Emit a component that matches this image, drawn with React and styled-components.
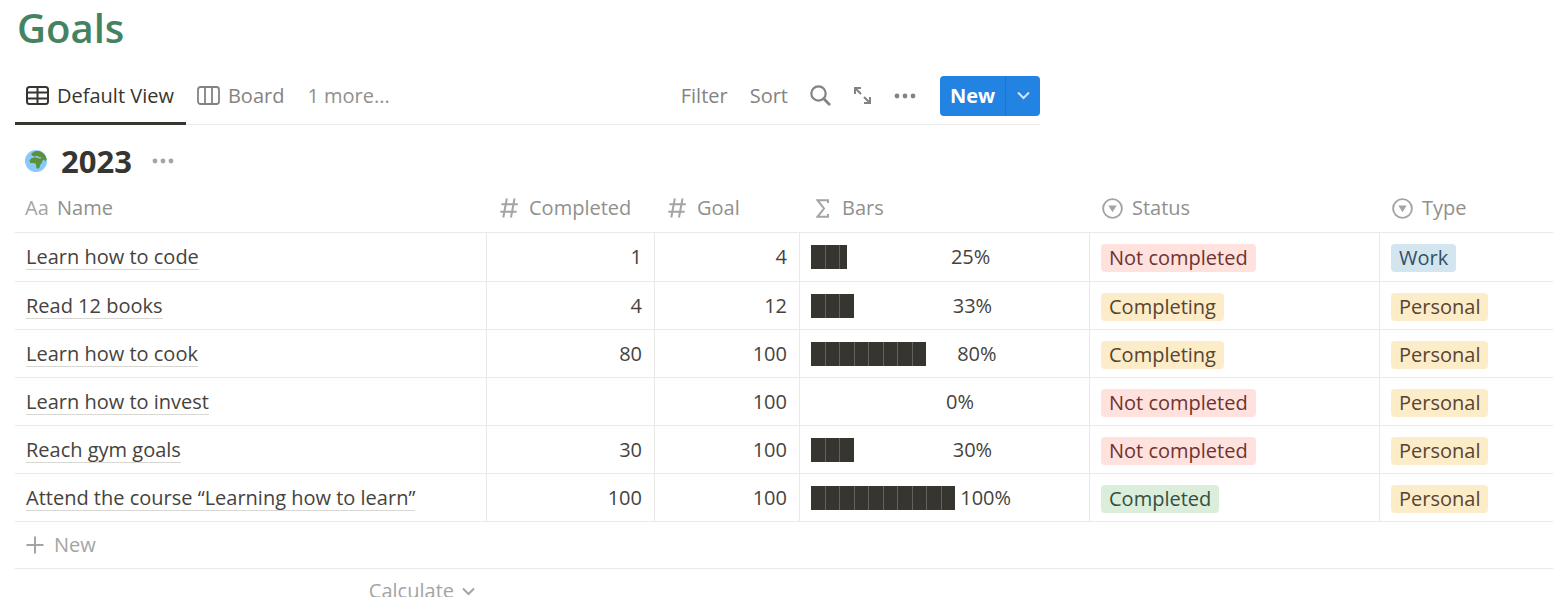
import React from 'react'
import styled, { createGlobalStyle, css } from 'styled-components'

const GlobalStyle = createGlobalStyle`
  * {
    box-sizing: border-box;
  }

  body {
    margin: 0;
    background: #fff;
    color: #45433e;
    font-family: 'Open Sans', 'Noto Sans', sans-serif;
    font-size: 20px;
    line-height: 28px;
  }

  button {
    padding: 0;
    border: 0;
    background: none;
    color: inherit;
    font: inherit;
    cursor: pointer;
  }

  svg {
    display: block;
    flex: none;
  }
`

const Page = styled.main`
  padding: 0 0 0 15px;
`

const Title = styled.h1`
  margin: 0;
  padding: 0 2px;
  color: #448361;
  font-size: 40px;
  font-weight: 600;
  line-height: 56px;
`

const Toolbar = styled.div`
  display: flex;
  justify-content: space-between;
  max-width: 1025px;
  margin-top: 13px;
  border-bottom: 1px solid #e9e9e7;
`

const Views = styled.nav`
  display: flex;
`

const ViewTab = styled.button`
  display: flex;
  align-items: center;
  gap: 8px;
  height: 56px;
  margin-bottom: -1px;
  padding: 0 12px 0 11px;
  border-bottom: 3px solid transparent;
  color: #85837f;
  font-weight: 500;

  ${({ $active }) =>
    $active &&
    css`
      border-bottom-color: #37352f;
      color: #37352f;
    `}

  ${({ $plain }) =>
    $plain &&
    css`
      color: #91908c;
      font-weight: 400;
    `}
`

const Actions = styled.div`
  display: flex;
  align-items: center;
  gap: 22px;
  padding-bottom: 2px;
  color: #85837f;
`

const ActionButton = styled.button`
  display: flex;
  align-items: center;
`

const SplitButton = styled.div`
  display: flex;
  height: 40px;
  margin-left: 2px;
  border-radius: 4px;
  overflow: hidden;
  background: #2383e2;
  color: #fff;
`

const SplitPart = styled.button`
  display: flex;
  align-items: center;
  justify-content: center;
  width: ${({ $main }) => ($main ? 66 : 34)}px;
  border-right: ${({ $main }) => ($main ? '1px solid #1f75ca' : 0)};
  color: ${({ $main }) => ($main ? '#fff' : '#d3e6f9')};
  font-weight: 700;
`

const SectionHeader = styled.div`
  display: flex;
  align-items: center;
  height: 59px;
  padding: 12px 10px 0;
  color: #a5a4a1;
`

const SectionTitle = styled.h2`
  margin: 0 20px 0 14px;
  color: #37352f;
  font-size: 31px;
  font-weight: 700;
  line-height: 40px;
`

const Table = styled.table`
  width: 100%;
  border-collapse: separate;
  border-spacing: 0;
  table-layout: fixed;

  tbody tr:first-child td {
    height: 49px;
  }
`

const Col = styled.col`
  width: ${({ $width }) => ($width ? `${$width}px` : 'auto')};
`

const HeadCell = styled.th`
  height: 49px;
  padding: 0 12px 0 10px;
  border-bottom: 1px solid #e9e9e7;
  color: #91908c;
  font-weight: 400;
  text-align: left;
`

const HeadLabel = styled.div`
  display: flex;
  align-items: center;
  gap: 8px;
`

const HeadIcon = styled.span`
  display: flex;
  justify-content: center;
  width: 24px;
  color: #a5a4a1;
  font-weight: 500;
`

const Cell = styled.td`
  height: 48px;
  padding: 0 12px 0 11px;
  border-right: 1px solid #e9e9e7;
  border-bottom: 1px solid #e9e9e7;
  text-align: ${({ $align }) => $align || 'left'};
  white-space: nowrap;

  &:last-child {
    border-right: 0;
  }
`

const PageLink = styled.a`
  display: inline-block;
  border-bottom: 1px solid #d8d7d4;
  color: inherit;
  font-weight: 500;
  line-height: 25px;
  text-decoration: none;
`

const Progress = styled.div`
  display: flex;
  align-items: center;
  white-space: pre;
`

const Blocks = styled.span`
  display: flex;
  gap: 1px;
  height: 24px;
  background: #63615c;
`

const Block = styled.span`
  flex: ${({ $half }) => ($half ? 1 : 2)} 1 0;
  background: #37352f;
`

const tones = {
  red: { background: '#ffe2dd', color: '#6e3331' },
  yellow: { background: '#fdecc8', color: '#574431' },
  green: { background: '#dbeddb', color: '#34503f' },
  blue: { background: '#d3e5ef', color: '#34505f' },
}

const Tag = styled.span`
  display: block;
  width: fit-content;
  margin-top: 2px;
  padding: 0 8px;
  border-radius: 4px;
  background: ${({ $tone }) => tones[$tone].background};
  color: ${({ $tone }) => tones[$tone].color};
`

const FootCell = styled.td`
  height: ${({ $line }) => ($line ? 47 : 44)}px;
  padding: 0 12px 0 11px;
  border-bottom: ${({ $line }) => ($line ? '1px solid #e9e9e7' : 0)};
  color: #a5a4a1;
`

const FootButton = styled.button`
  display: flex;
  align-items: center;
  gap: ${({ $end }) => ($end ? 8 : 10)}px;
  margin-left: ${({ $end }) => ($end ? 'auto' : 0)};
`

const TableIcon = () => (
  <svg width="23" height="19" viewBox="0 0 23 19" fill="none" stroke="currentColor" strokeWidth="2">
    <rect x="1" y="1" width="21" height="17" rx="2.5" />
    <path d="M1 6.500h21M1 12.500h21M11.500 1v17" />
  </svg>
)

const BoardIcon = () => (
  <svg width="23" height="19" viewBox="0 0 23 19" fill="none" stroke="currentColor" strokeWidth="1.8">
    <rect x="1" y="1" width="21" height="17" rx="2.5" />
    <path d="M8 1v17M15 1v17" />
  </svg>
)

const SearchIcon = () => (
  <svg width="21" height="21" viewBox="0 0 21 21" fill="none" stroke="currentColor">
    <circle cx="8.5" cy="8.5" r="7.2" strokeWidth="2.2" />
    <path d="M13.800 13.800l5.400 5.400" strokeWidth="2.8" strokeLinecap="round" />
  </svg>
)

const ExpandIcon = () => (
  <svg width="19" height="19" viewBox="0 0 19 19" fill="none" stroke="currentColor" strokeWidth="2">
    <path d="M2 8V2h6M2 2l6 6M11 11l6 6M17 11v6h-6" />
  </svg>
)

const DotsIcon = () => (
  <svg width="22" height="6" viewBox="0 0 22 6" fill="currentColor">
    <circle cx="3" cy="3" r="2.4" />
    <circle cx="11" cy="3" r="2.4" />
    <circle cx="19" cy="3" r="2.4" />
  </svg>
)

const ChevronIcon = () => (
  <svg width="13" height="9" viewBox="0 0 13 9" fill="none" stroke="currentColor" strokeWidth="2">
    <path d="M1 1.500l5.500 5.500L12 1.500" />
  </svg>
)

const PlusIcon = () => (
  <svg width="18" height="18" viewBox="0 0 18 18" stroke="currentColor" strokeWidth="2">
    <path d="M9 0.500v17M0.500 9h17" />
  </svg>
)

const GlobeIcon = () => (
  <svg width="22" height="22" viewBox="0 0 22 22">
    <circle cx="11" cy="11" r="11" fill="#88c9f9" />
    <path
      d="M8 2.200C10 1 12 .7 14 1c4 1 7 4.200 7.600 8.400l-1.400 1.800-1.400-1.600-1.200 1-.8 2.400-1.500 1.600-.6 2.600-1.700 1.700-1.700-1.400-.3-3.400-2.500-1-3.300-.2-.7-2.300 1.800-2.300 2.200-.6 1-1.500-2.200-.4-1.200-1.600z"
      fill="#5c913b"
    />
    <path d="M9.500 6.800l2.500-1 2 1.200 2.400.2-.6 1.200-2.500-.2-1.800-.8-1.800.4z" fill="#88c9f9" />
  </svg>
)

const TextIcon = () => <span>Aa</span>

const HashIcon = () => (
  <svg width="18" height="20" viewBox="0 0 18 20" stroke="currentColor" strokeWidth="2">
    <path d="M6.800.5L3.300 19.500M14.500.5L11 19.500M1.500 6.300h16.300M.3 13.700h16.300" />
  </svg>
)

const SumIcon = () => (
  <svg width="13" height="19" viewBox="0 0 13 19" fill="none" stroke="currentColor" strokeWidth="2">
    <path d="M12 4V1.200H1.500L8 9.500l-6.500 8.300H12V15" />
  </svg>
)

const SelectIcon = () => (
  <svg width="21" height="21" viewBox="0 0 21 21">
    <circle cx="10.5" cy="10.5" r="9.4" fill="none" stroke="currentColor" strokeWidth="1.9" />
    <path d="M6.300 7.500h8.400l-4.200 6.800z" fill="currentColor" />
  </svg>
)

const columns = [
  { name: 'Name', width: 472, icon: TextIcon },
  { name: 'Completed', width: 168, icon: HashIcon },
  { name: 'Goal', width: 145, icon: HashIcon },
  { name: 'Bars', width: 290, icon: SumIcon },
  { name: 'Status', width: 290, icon: SelectIcon },
  { name: 'Type', icon: SelectIcon },
]

// blocks: filled tenths of the bar, pad: spaces between the bar and its label
const goals = [
  { name: 'Learn how to code', completed: 1, goal: 4, blocks: 2.5, pad: 20, percent: 25, status: 'Not completed', type: 'Work' },
  { name: 'Read 12 books', completed: 4, goal: 12, blocks: 3, pad: 19, percent: 33, status: 'Completing', type: 'Personal' },
  { name: 'Learn how to cook', completed: 80, goal: 100, blocks: 8, pad: 6, percent: 80, status: 'Completing', type: 'Personal' },
  { name: 'Learn how to invest', goal: 100, blocks: 0, pad: 26, percent: 0, status: 'Not completed', type: 'Personal' },
  { name: 'Reach gym goals', completed: 30, goal: 100, blocks: 3, pad: 19, percent: 30, status: 'Not completed', type: 'Personal' },
  { name: 'Attend the course “Learning how to learn”', completed: 100, goal: 100, blocks: 10, pad: 1, percent: 100, status: 'Completed', type: 'Personal' },
]

const FULL_BAR = 144

const tagTones = {
  'Not completed': 'red',
  Completing: 'yellow',
  Completed: 'green',
  Work: 'blue',
  Personal: 'yellow',
}

const ProgressBar = ({ blocks, pad, percent }) => (
  <Progress>
    <Blocks style={{ width: Math.round((blocks / 10) * FULL_BAR) }}>
      {Array.from({ length: Math.ceil(blocks) }, (_, i) => (
        <Block key={i} $half={blocks - i < 1} />
      ))}
    </Blocks>
    <span>{`${' '.repeat(pad)}${percent}%`}</span>
  </Progress>
)

const GoalRow = ({ goal }) => (
  <tr>
    <Cell>
      <PageLink href="#">{goal.name}</PageLink>
    </Cell>
    <Cell $align="right">{goal.completed}</Cell>
    <Cell $align="right">{goal.goal}</Cell>
    <Cell>
      <ProgressBar blocks={goal.blocks} pad={goal.pad} percent={goal.percent} />
    </Cell>
    <Cell>
      <Tag $tone={tagTones[goal.status]}>{goal.status}</Tag>
    </Cell>
    <Cell>
      <Tag $tone={tagTones[goal.type]}>{goal.type}</Tag>
    </Cell>
  </tr>
)

const App = () => (
  <Page>
    <GlobalStyle />
    <Title>Goals</Title>
    <Toolbar>
      <Views>
        <ViewTab $active>
          <TableIcon />
          Default View
        </ViewTab>
        <ViewTab>
          <BoardIcon />
          Board
        </ViewTab>
        <ViewTab $plain>1 more...</ViewTab>
      </Views>
      <Actions>
        <ActionButton>Filter</ActionButton>
        <ActionButton>Sort</ActionButton>
        <ActionButton aria-label="Search">
          <SearchIcon />
        </ActionButton>
        <ActionButton aria-label="Open full page">
          <ExpandIcon />
        </ActionButton>
        <ActionButton aria-label="More options">
          <DotsIcon />
        </ActionButton>
        <SplitButton>
          <SplitPart $main>New</SplitPart>
          <SplitPart aria-label="New from template">
            <ChevronIcon />
          </SplitPart>
        </SplitButton>
      </Actions>
    </Toolbar>
    <SectionHeader>
      <GlobeIcon />
      <SectionTitle>2023</SectionTitle>
      <ActionButton aria-label="Section options">
        <DotsIcon />
      </ActionButton>
    </SectionHeader>
    <Table>
      <colgroup>
        {columns.map(({ name, width }) => (
          <Col key={name} $width={width} />
        ))}
      </colgroup>
      <thead>
        <tr>
          {columns.map(({ name, icon: Icon }) => (
            <HeadCell key={name} scope="col">
              <HeadLabel>
                <HeadIcon>
                  <Icon />
                </HeadIcon>
                {name}
              </HeadLabel>
            </HeadCell>
          ))}
        </tr>
      </thead>
      <tbody>
        {goals.map(goal => (
          <GoalRow key={goal.name} goal={goal} />
        ))}
      </tbody>
      <tfoot>
        <tr>
          <FootCell colSpan={6} $line>
            <FootButton>
              <PlusIcon />
              New
            </FootButton>
          </FootCell>
        </tr>
        <tr>
          <FootCell>
            <FootButton $end>
              Calculate
              <ChevronIcon />
            </FootButton>
          </FootCell>
        </tr>
      </tfoot>
    </Table>
  </Page>
)

export default App
